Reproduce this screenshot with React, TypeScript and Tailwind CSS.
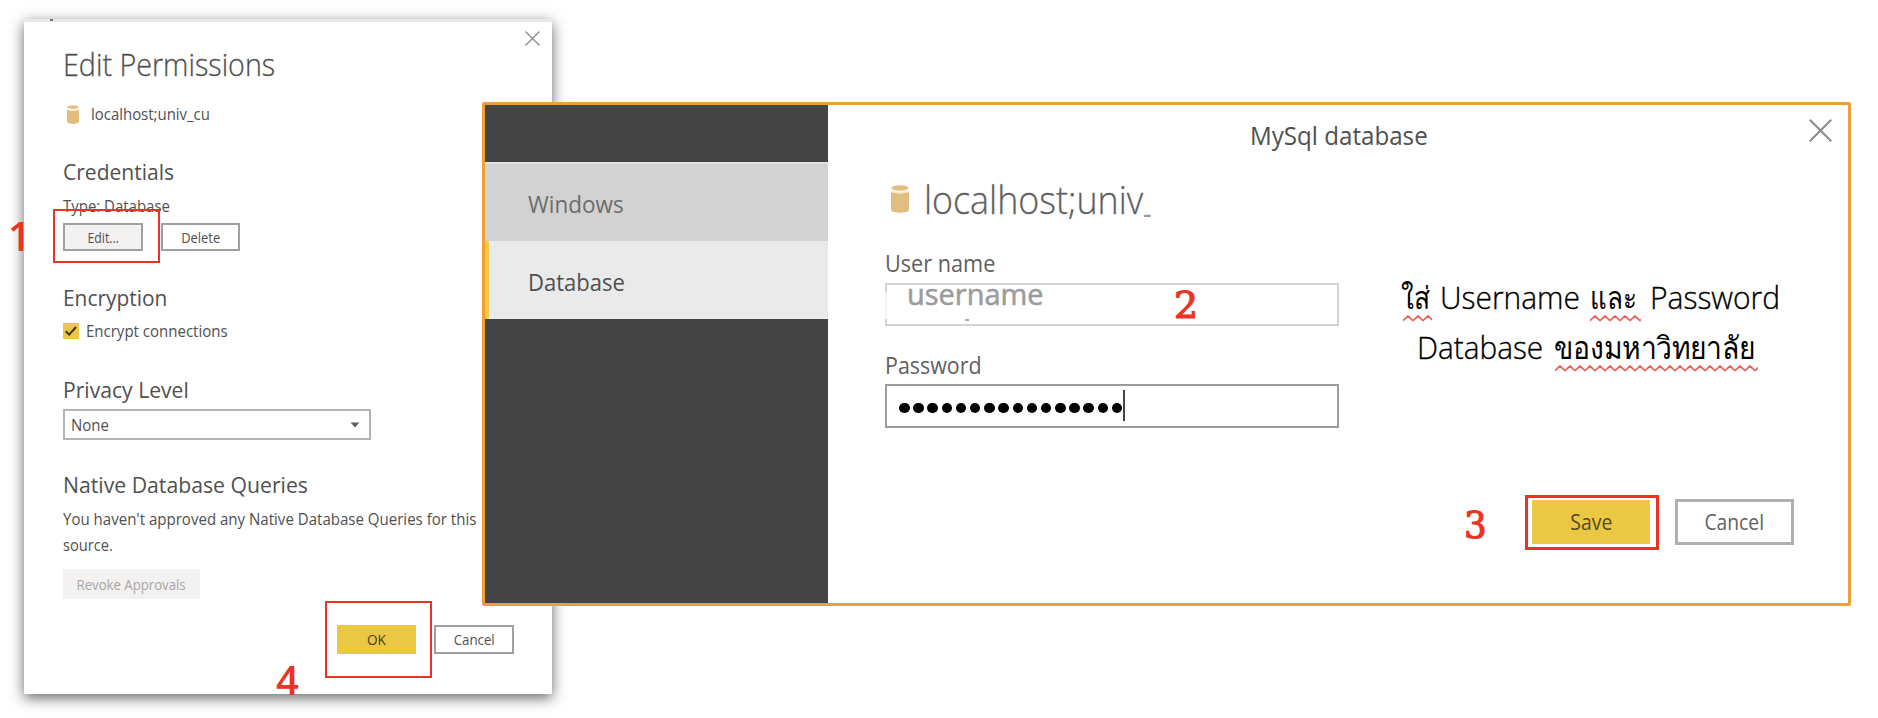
import React from "react";

const SANS = "font-['Open_Sans','Noto_Sans',sans-serif]";
const LINE = "inline-block origin-left whitespace-nowrap";

function DatabaseIcon({ className }: { className: string }) {
  return (
    <svg viewBox="0 0 18 28" preserveAspectRatio="none" className={className}>
      <path d="M0 6.5C2 9 16 9 18 6.5V25C17 28.6 1 28.6 0 25Z" fill="#e2bd80" />
      <ellipse cx="9" cy="3" rx="8.4" ry="2.7" fill="#e2bd80" />
      <path d="M0.4 4.4C2 7.6 16 7.6 17.6 4.4V6.6C15 9 3 9 0.4 6.6Z" fill="#f5e6cc" />
    </svg>
  );
}

function CloseIcon({ className }: { className: string }) {
  return (
    <svg viewBox="0 0 22 22" className={className} fill="none" stroke="#8c8c8c" strokeWidth="2">
      <path d="M0.7 0.7L21.3 21.3M21.3 0.7L0.7 21.3" />
    </svg>
  );
}

function Squiggle({ className }: { className: string }) {
  return (
    <svg className={className} fill="none">
      <defs>
        <pattern id="wave" width="10" height="7" patternUnits="userSpaceOnUse">
          <path d="M-1 6L0 5.6L5 1L10 5.6L11 6" stroke="#ee5f57" strokeWidth="1.7" fill="none" />
        </pattern>
      </defs>
      <rect width="100%" height="7" fill="url(#wave)" />
    </svg>
  );
}

function PermissionsDialog() {
  return (
    <section className="absolute left-[24px] top-[19px] flex h-[675px] w-[528px] flex-col border-t-[3px] border-[#e9e9e9] bg-white pl-[39px] text-[#505050] shadow-[0_4px_13px_rgba(0,0,0,0.6)]">
      <CloseIcon className="absolute left-[501px] top-[9px] size-[15px]" />
      <h1 className="mt-[22px] h-10 text-[31px] leading-10 font-light text-[#505050] [-webkit-text-stroke:0.3px]">
        <span className={`${LINE} scale-x-[0.925]`}>Edit Permissions</span>
      </h1>
      <div className="mt-5 flex h-5 items-center pl-1 text-[16.5px] leading-5">
        <DatabaseIcon className="h-[19px] w-3" />
        <span className={`${LINE} ml-3 scale-x-[0.905]`}>localhost;univ_cu</span>
      </div>
      <h2 className="mt-[32px] h-[30px] text-[22px] leading-[30px]">
        <span className={`${LINE} scale-x-[0.956]`}>Credentials</span>
      </h2>
      <p className="mt-[10px] h-5 text-[17px] leading-5">
        <span className={`${LINE} scale-x-[0.88]`}>Type: Database</span>
      </p>
      <div className="mt-[7px] flex h-7 gap-[18px] text-[15px]">
        <button className="flex w-[80px] items-center justify-center border-2 border-[#a0a0a0] bg-[#f3f2f1]">
          <span className="scale-x-[0.819]">Edit...</span>
        </button>
        <button className="flex w-[79px] items-center justify-center border-2 border-[#a0a0a0] bg-white">
          <span className="scale-x-[0.861]">Delete</span>
        </button>
      </div>
      <h2 className="mt-[31px] h-[31px] text-[22px] leading-[31px]">
        <span className={`${LINE} scale-x-[0.95]`}>Encryption</span>
      </h2>
      <label className="mt-[10px] flex h-4 items-center gap-[7px] text-[17px] leading-4">
        <svg viewBox="0 0 16 16" className="size-4">
          <rect width="16" height="16" fill="#ebc843" />
          <path d="M2.8 8.2L6.2 11.6L13 4" fill="none" stroke="#3b3415" strokeWidth="2" />
        </svg>
        <span className={`${LINE} scale-x-[0.883]`}>Encrypt connections</span>
      </label>
      <h2 className="mt-[35px] h-[30px] text-[22px] leading-[30px]">
        <span className={`${LINE} scale-x-[0.96]`}>Privacy Level</span>
      </h2>
      <div className="mt-[5px] flex h-[31px] w-[308px] items-center justify-between border-2 border-[#b4b4b4] pr-[9px] pl-[6px] text-[17px]">
        <span className={`${LINE} scale-x-[0.884]`}>None</span>
        <svg viewBox="0 0 10 6" className="h-[6px] w-[10px]">
          <path d="M0.5 0.5H9.5L5 5.5Z" fill="#606060" />
        </svg>
      </div>
      <h2 className="mt-[29px] h-[30px] text-[22px] leading-[30px]">
        <span className={`${LINE} scale-x-[0.964]`}>Native Database Queries</span>
      </h2>
      <p className="mt-[7px] flex h-[52px] flex-col text-[17px] leading-[26px]">
        <span className={`${LINE} scale-x-[0.885]`}>You haven't approved any Native Database Queries for this</span>
        <span className={`${LINE} scale-x-[0.86]`}>source.</span>
      </p>
      <button className="mt-[11px] flex h-[30px] w-[137px] items-center justify-center bg-[#f3f2f1] text-[15px] text-[#a8a6a4]">
        <span className="whitespace-nowrap scale-x-[0.878]">Revoke Approvals</span>
      </button>
      <div className="mt-[26px] flex h-[29px] gap-[18px] pl-[274px] text-[15px]">
        <button className="flex w-[79px] items-center justify-center bg-[#ebc843] text-[#453c14]">
          <span className="scale-x-[0.911]">OK</span>
        </button>
        <button className="flex w-[80px] items-center justify-center border-2 border-[#a0a0a0]">
          <span className="scale-x-[0.884]">Cancel</span>
        </button>
      </div>
    </section>
  );
}

function CredentialsDialog() {
  return (
    <section className="absolute left-[482px] top-[102px] flex h-[504px] w-[1369px] rounded-[2px] border-[3px] border-[#f09e38] bg-white text-[#606060]">
      <nav className="flex w-[343px] flex-col bg-[#444] pt-[57px] text-[24.5px]">
        <div className="flex h-[79px] items-center border-t-2 border-[#e2e2e2] bg-[#d2d2d2] pt-[3px] pl-[43px] text-[#6c6c6c]">
          <span className={`${LINE} scale-x-[0.918]`}>Windows</span>
        </div>
        <div className="flex h-[78px] items-center border-l-4 border-[#efca42] bg-[#eaeaea] pt-[4px] pl-[39px] text-[#505050]">
          <span className={`${LINE} scale-x-[0.898]`}>Database</span>
        </div>
      </nav>
      <div className="relative flex flex-1 flex-col pl-[57px]">
        <CloseIcon className="absolute left-[981px] top-[14px] size-[23px]" />
        <h1 className="mt-[10px] h-10 pl-[365px] text-[25px] leading-10 text-[#505050]">
          <span className={`${LINE} scale-x-[0.966]`}>MySql database</span>
        </h1>
        <div className="mt-[19px] flex h-[50px] items-center pl-[6px] text-[39px] leading-[50px] font-light">
          <DatabaseIcon className="h-7 w-[18px]" />
          <span className="ml-[15px] w-[220px]">
            <span className={`${LINE} scale-x-[0.918] [-webkit-text-stroke:0.3px]`}>localhost;univ</span>
          </span>
          <span className="mt-[8px] h-[50px] origin-left scale-x-50 text-[32px] leading-[44px] font-bold text-[#9a9a9a]">_</span>
        </div>
        <label className="mt-[24px] h-[30px] text-[23.5px] leading-[30px]">
          <span className={`${LINE} scale-x-[0.922]`}>User name</span>
        </label>
        <div className="relative mt-[5px] flex h-[43px] w-[454px] border-2 border-[#d2d2d2] pl-[20px] text-[30px] leading-[18px] text-[#9c9c9c]">
          <i className="absolute -left-0.5 top-[7px] h-[27px] w-0.5 bg-[#f4f4f4]" />
          <i className="absolute left-[78px] top-[34px] h-0.5 w-1 bg-[#aaa]" />
          <span className={`${LINE} scale-x-[0.965] [-webkit-text-stroke:0.6px]`}>username</span>
        </div>
        <label className="mt-[24px] h-[30px] text-[23.5px] leading-[30px]">
          <span className={`${LINE} scale-x-[0.912]`}>Password</span>
        </label>
        <div className="mt-[4px] flex h-[44px] w-[454px] items-center border-2 border-[#9c9c9c] pl-[12px]">
          <span className="flex gap-[3.7px] pt-[4px]">
            {Array.from({ length: 16 }, (_, i) => (
              <i key={i} className="size-[10.5px] rounded-full bg-black" />
            ))}
          </span>
          <i className="ml-px h-[31px] w-[2px] -translate-y-[1px] bg-[#444]" />
        </div>
        <div className="mt-[71px] flex h-[46px] gap-[25px] pl-[647px] text-[21.5px]">
          <button className="mt-px mb-px flex w-[118px] items-center justify-center bg-[#ebc843] text-[#54491a]">
            <span className="scale-x-[0.902]">Save</span>
          </button>
          <button className="flex w-[119px] items-center justify-center border-[3px] border-[#b0b0b0] bg-white">
            <span className="scale-x-[0.895]">Cancel</span>
          </button>
        </div>
      </div>
      <div className="absolute left-[916px] top-[167px] flex h-[100px] w-[384px] flex-col text-[31px] leading-[50px] text-black">
        <p className="flex h-[50px]">
          <span className="relative w-[40px]">
            <span className={`${LINE} scale-x-[0.853]`}>ใส่</span>
            <Squiggle className="absolute left-[2px] top-[43px] h-[7px] w-[29px]" />
          </span>
          <span className="w-[152px] font-light [-webkit-text-stroke:0.35px]">
            <span className={`${LINE} scale-x-[0.965]`}>Username</span>
          </span>
          <span className="relative w-[61px]">
            <span className={`${LINE} scale-x-[0.839]`}>และ</span>
            <Squiggle className="absolute left-0 top-[43px] h-[7px] w-[51px]" />
          </span>
          <span className={`${LINE} font-light scale-x-[0.967] [-webkit-text-stroke:0.35px]`}>Password</span>
        </p>
        <p className="flex h-[50px] pl-[16px]">
          <span className="w-[137px] font-light [-webkit-text-stroke:0.35px]">
            <span className={`${LINE} scale-x-[0.96]`}>Database</span>
          </span>
          <span className="relative">
            <span className={`${LINE} scale-x-[0.912]`}>ของมหาวิทยาลัย</span>
            <Squiggle className="absolute left-px top-[43px] h-[7px] w-[203px]" />
          </span>
        </p>
      </div>
    </section>
  );
}

function Annotations() {
  return (
    <div className="text-[#ec3323]">
      <div className="absolute left-[53px] top-[209px] h-[54px] w-[107px] border-2 border-[#ec3323]" />
      <div className="absolute left-[325px] top-[601px] h-[77px] w-[107px] border-2 border-[#ec3323]" />
      <div className="absolute left-[1525px] top-[495px] h-[55px] w-[134px] border-[3px] border-[#ec3323]" />
      <span className="absolute left-[8px] top-[216px] text-[40px] leading-10 font-semibold">1</span>
      <span className="absolute left-[1174px] top-[285px] font-['DejaVu_Serif',serif] text-[38px] leading-10 [-webkit-text-stroke:1.2px]">2</span>
      <span className="absolute left-[1464px] top-[505px] origin-left scale-x-[0.94] font-['DejaVu_Serif',serif] text-[38px] leading-10 [-webkit-text-stroke:1.2px]">3</span>
      <span className="absolute left-[276px] top-[660px] text-[40px] leading-10 font-semibold">4</span>
    </div>
  );
}

export default function App() {
  return (
    <main className={`relative h-[718px] w-[1878px] overflow-hidden bg-white ${SANS}`}>
      <PermissionsDialog />
      <i className="absolute left-[50px] top-[19px] h-[2px] w-[3px] bg-[#777]" />
      <CredentialsDialog />
      <Annotations />
    </main>
  );
}
